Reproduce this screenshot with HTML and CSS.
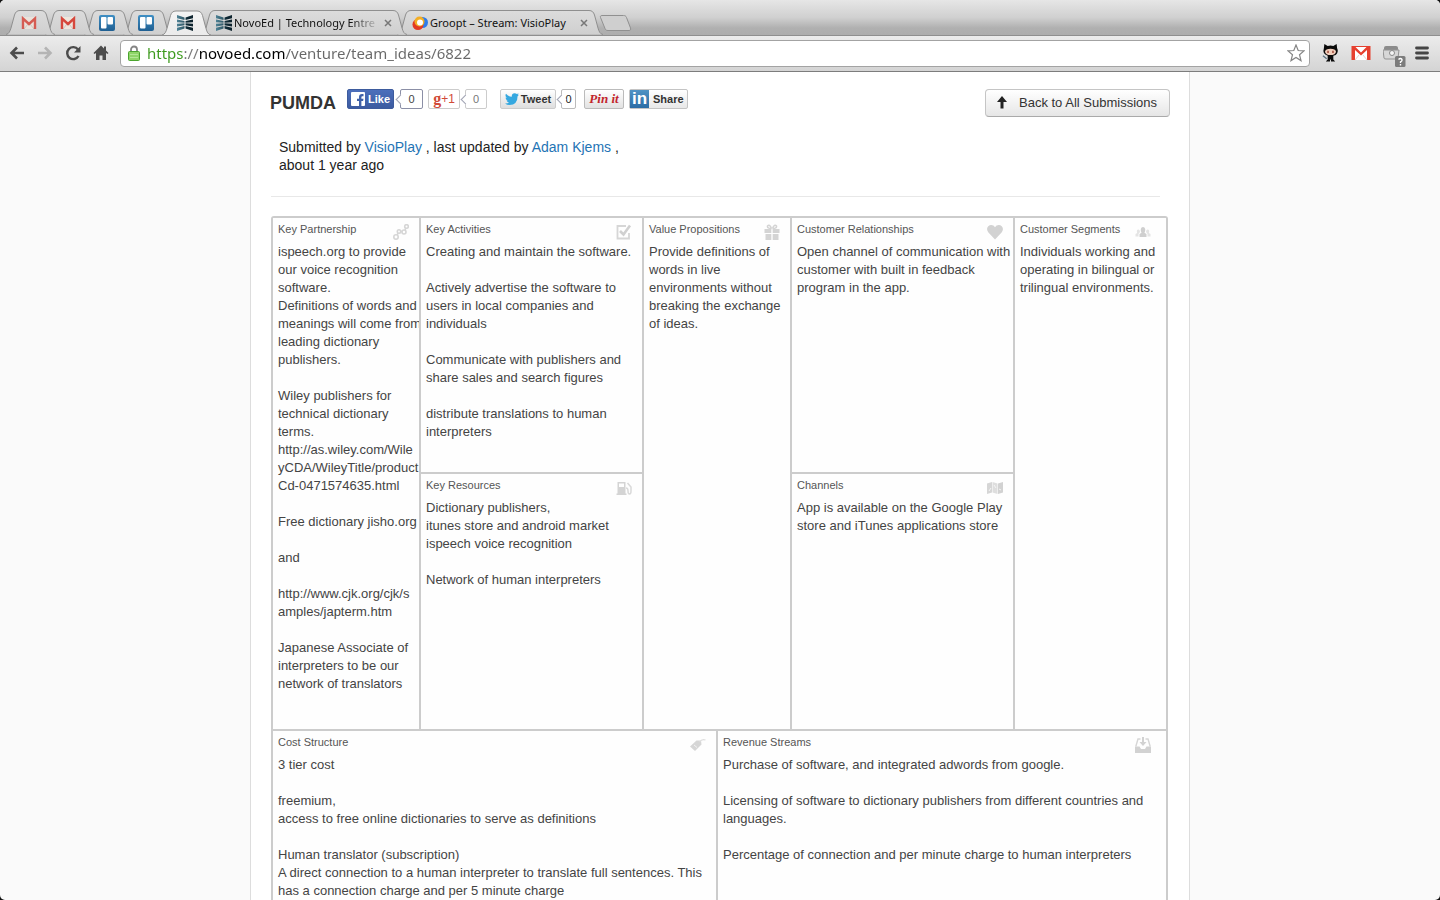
FILE: index.html
```html
<!DOCTYPE html>
<html lang="en">
<head>
<meta charset="utf-8">
<title>NovoEd | PUMDA</title>
<link rel="stylesheet" href="styles.css">
</head>
<body>
<svg class="defs" aria-hidden="true">
  <defs>
    <linearGradient id="tabFill" x1="0" y1="0" x2="0" y2="1"><stop offset="0" stop-color="#dcdcdc"/><stop offset="1" stop-color="#cfcfcf"/></linearGradient>
    <linearGradient id="tabOn" x1="0" y1="0" x2="0" y2="1"><stop offset="0" stop-color="#f4f4f4"/><stop offset="1" stop-color="#ebebeb"/></linearGradient>
    <linearGradient id="trelloFill" x1="0" y1="0" x2="0" y2="1"><stop offset="0" stop-color="#3f8fc4"/><stop offset="1" stop-color="#1f5f92"/></linearGradient>
    <linearGradient id="novoFill"><stop offset="0" stop-color="#4d8296"/><stop offset=".5" stop-color="#2f5563"/><stop offset=".6" stop-color="#0d2a36"/><stop offset="1" stop-color="#0d222c"/></linearGradient>
    <symbol id="tabSmall" viewBox="0 0 49 25"><path d="M0 24.500C3 24 4 21 5 18L8.500 5C9.500 2 11 .5 14 .5H35C38 .5 39.500 2 40.500 5L44 18C45 21.500 46 24 49 24.500"/></symbol>
    <symbol id="tabWide" viewBox="0 0 206 25"><path d="M0 24.500C3 24 4 21 5 18L8.500 5C9.500 2 11 .5 14 .5H192C195 .5 196.500 2 197.500 5L201 18C202 21.500 203 24 206 24.500"/></symbol>
    <symbol id="gmail" viewBox="0 0 16 14"><path d="M1 1H15V13H1z" fill="#eee6dd"/><path d="M3 13l4-5M13 13l-4-5" stroke="#cfc4bd" fill="none"/><path d="M2 13V2.500L8 8l6-5.500V13" fill="none" stroke="#d6483d" stroke-width="2.400"/></symbol>
    <symbol id="trello" viewBox="0 0 16 16"><rect width="16" height="16" rx="2" fill="url(#trelloFill)"/><rect x="2" y="2" width="5.500" height="11.500" rx="1" fill="#fff"/><rect x="8.500" y="2" width="5.500" height="7.500" rx="1" fill="#fff"/></symbol>
    <symbol id="novo" viewBox="0 0 16 16"><path d="M0 0L7.500 2.500V5L0 3.200zM16 0L8.500 2.500V5L16 3.200zM0 4.500L7.500 6V7.800L0 7.300zM16 4.500L8.500 6V7.800L16 7.300zM0 8.700L7.500 8.300V10.200L0 11.500zM16 8.700L8.500 8.300V10.200L16 11.500zM0 12.800L7.500 11V13.500L0 16zM16 12.800L8.500 11V13.500L16 16z" fill="url(#novoFill)"/></symbol>
  </defs>
</svg>
<div class="window">
  <header class="chrome">
    <nav class="tabs" aria-label="Tabs">
      <div class="tab t1"><svg class="shape"><use href="#tabSmall"/></svg><svg class="fav"><use href="#gmail"/></svg></div>
      <div class="tab t2"><svg class="shape"><use href="#tabSmall"/></svg><svg class="fav"><use href="#gmail"/></svg></div>
      <div class="tab t3"><svg class="shape"><use href="#tabSmall"/></svg><svg class="fav"><use href="#trello"/></svg></div>
      <div class="tab t4"><svg class="shape"><use href="#tabSmall"/></svg><svg class="fav"><use href="#trello"/></svg></div>
      <div class="tab active"><svg class="shape"><use href="#tabSmall"/></svg><svg class="fav"><use href="#novo"/></svg></div>
      <div class="tab wide t5"><svg class="shape"><use href="#tabWide"/></svg><svg class="fav"><use href="#novo"/></svg><span class="tab-title faded">NovoEd | Technology Entre</span><button class="close" aria-label="Close tab"><svg viewBox="0 0 8 8"><path d="M1 1l6 6M7 1L1 7"/></svg></button></div>
      <div class="tab wide t6"><svg class="shape"><use href="#tabWide"/></svg><svg class="fav" viewBox="0 0 16 16"><circle cx="10.500" cy="7.500" r="5.500" fill="#2d7bea"/><circle cx="6" cy="9.500" r="5.500" fill="#e23a24"/><circle cx="7.500" cy="6.500" r="5" fill="#f3ae24"/><circle cx="8" cy="7.500" r="3" fill="#fff"/></svg><span class="tab-title">Groopt – Stream: VisioPlay</span><button class="close" aria-label="Close tab"><svg viewBox="0 0 8 8"><path d="M1 1l6 6M7 1L1 7"/></svg></button></div>
      <button class="new-tab" aria-label="New tab"><svg viewBox="0 0 33 16"><path d="M3 .5H24.500C26 .5 27 1 27.500 2.500L31.500 13C32 14.500 31.500 15.500 30 15.500H9C7.500 15.500 6.500 15 6 13.500L1.500 2.500C1 1.500 1.500 .5 3 .5z" fill="#cfcfcf" stroke="#909090"/></svg></button>
    </nav>
    <div class="toolbar">
      <button class="tool" aria-label="Back"><svg viewBox="0 0 16 16"><path d="M15 8H3M8 2.500L2.500 8L8 13.500" fill="none" stroke="#4c4c4c" stroke-width="2.600"/></svg></button>
      <button class="tool" aria-label="Forward"><svg viewBox="0 0 16 16"><path d="M1 8H13M8 2.500L13.500 8L8 13.500" fill="none" stroke="#b4b4b4" stroke-width="2.600"/></svg></button>
      <button class="tool" aria-label="Reload"><svg viewBox="0 0 16 16"><path d="M13 4.500A6 6 0 1 0 13.500 11" fill="none" stroke="#4c4c4c" stroke-width="2.400"/><path d="M15.500 1V7.500H9z" fill="#4c4c4c"/></svg></button>
      <button class="tool" aria-label="Home"><svg viewBox="0 0 16 16"><path d="M8 .5L.5 8L1.500 9L3 8V15H6.500V10.500H9.500V15H13V8L14.500 9L15.500 8L13 5.500V1.500H11V3.500z" fill="#4c4c4c"/></svg></button>
      <div class="omnibox">
        <svg class="lock" viewBox="0 0 12 16"><path d="M3 7V4.500a3 3 0 0 1 6 0V7" fill="none" stroke="#858585" stroke-width="1.800"/><rect x=".5" y="6.500" width="11" height="9" rx="1" fill="#8fd468" stroke="#4ba52e"/><path d="M2 9.500H10M2 12.500H10" stroke="#b3e795"/></svg>
        <input class="url" type="text" aria-label="Address" value="https://novoed.com/venture/team_ideas/6822">
        <button class="star" aria-label="Bookmark"><svg viewBox="0 0 18 18"><path d="M9 1l2.200 5.500 5.800.4-4.500 3.800 1.500 5.900L9 13.400l-5 3.200 1.500-5.900L1 6.900l5.800-.4z" fill="#fff" stroke="#858585" stroke-width="1.200"/></svg></button>
      </div>
      <div class="extensions">
        <button class="ext" aria-label="GitHub"><svg viewBox="0 0 18 20"><path d="M2 5L2.500.5L6 2.500Q9 1.500 12 2.500L15.500.5L16 5Q18 9 14.500 12L12 13V17L14 19H9.500V17H8.500V19H4L6 17V13Q0 11 2 5z" fill="#0b0b0b"/><path d="M1 13l4 3" stroke="#5b7180" stroke-width="1.300"/><ellipse cx="9" cy="8.800" rx="5.800" ry="3.400" fill="#f1cdbb"/><path d="M5.500 7.500h1.800v2.500H5.500zM10.700 7.500h1.800v2.500h-1.800z" fill="#a95a48"/></svg></button>
        <button class="ext" aria-label="Gmail"><svg viewBox="0 0 20 20"><rect x=".5" y="3" width="19" height="14" fill="#e6402f"/><path d="M4.500 4h11L10 9.500zM4 7l6 5.500L16 7v10H4z" fill="#fff"/><path d="M4 17l4-5M16 17l-4-5" stroke="#e3d2ce"/></svg></button>
        <button class="ext" aria-label="Page extension"><svg viewBox="0 0 23 22"><rect x="1" y="1" width="14" height="5" rx="2" fill="#8b8b8b"/><path d="M0 5h16l-1 8q0 1-2 1H3q-2 0-2-1z" fill="#d7d7d7" stroke="#929292"/><circle cx="9" cy="8" r="2.500" fill="#f5f5f5" stroke="#888"/><rect x="12" y="11" width="10.500" height="11" rx="1.500" fill="#7c7c7c"/><path d="M15.500 14.500q2-2 3.500 0q.5 1.500-1.500 2.500v1M17.500 19v1.500" fill="none" stroke="#fff" stroke-width="1.400"/></svg></button>
        <button class="ext menu" aria-label="Menu"><svg viewBox="0 0 14 14"><path d="M1.500 2h11M1.500 7h11M1.500 12h11" stroke="#454545" stroke-width="2.800" stroke-linecap="round"/></svg></button>
      </div>
    </div>
  </header>
  <main class="page">
    <div class="container">
      <div class="heading">
        <h1>PUMDA</h1>
        <div class="social">
          <button class="fb"><svg viewBox="0 0 14 14"><rect width="14" height="14" rx="1" fill="#fff"/><path d="M8 14V9H6V6.700h2V5q0-3 3-3h1.500v2.300h-1.200q-.9 0-.9 1v1.400h2.100L12.100 9h-1.700v5z" fill="#3f61a9"/></svg>Like</button>
          <span class="count fb-count">0</span>
          <button class="gplus"><b>g</b>+1</button>
          <span class="count g-count">0</span>
          <button class="tweet"><svg viewBox="0 0 14 12"><path d="M0 10.500Q2.500 10.700 4 9.500Q2 9.200 1.500 7.500H2.800Q.6 6.800.5 4.500l1.300.4Q-.3 3 1 .8Q3.500 3.700 6.800 3.800Q6.500.3 9.700.2q1.300 0 2.100.9l1.900-.7-1.200 1.700 1.500-.4-1.400 1.600Q12.500 12 4.500 12 2 12 0 10.500z" fill="#35a8e0"/></svg>Tweet</button>
          <span class="count t-count">0</span>
          <button class="pin">Pin it</button>
          <button class="linkedin"><span class="in">in</span><span>Share</span></button>
        </div>
        <a class="back" href="#"><svg viewBox="0 0 10 13"><path d="M5 0L10 6H6.500V12.500H3.500V6H0z"/></svg>Back to All Submissions</a>
      </div>
      <p class="meta">Submitted by <a href="#">VisioPlay</a> , last updated by <a href="#">Adam Kjems</a> , about 1 year ago</p>
      <hr>
      <div class="canvas">
        <div class="top">
          <section class="cell tall">
            <div class="cell-head"><h2>Key Partnership</h2><svg viewBox="0 0 16 16"><g fill="none" stroke="#d6d6d6" stroke-width="1.600"><circle cx="3" cy="13" r="2.200"/><circle cx="6" cy="7.500" r="1.700"/><circle cx="11" cy="8" r="2"/><circle cx="13.500" cy="2.500" r="1.800"/><path d="M4 11l1.200-2M7.800 7.500H9M12 6l1-2"/></g></svg></div>
            <p>ispeech.org to provide
our voice recognition
software.
Definitions of words and
meanings will come from
leading dictionary
publishers.

Wiley publishers for
technical dictionary
terms.
http://as.wiley.com/Wile
yCDA/WileyTitle/product
Cd-0471574635.html

Free dictionary jisho.org

and

http://www.cjk.org/cjk/s
amples/japterm.htm

Japanese Associate of
interpreters to be our
network of translators</p>
          </section>
          <section class="cell">
            <div class="cell-head"><h2>Key Activities</h2><svg viewBox="0 0 16 16"><path d="M10 2H1.500V14.500H13V9" fill="none" stroke="#d6d6d6" stroke-width="1.800"/><path d="M4 7l3.500 3.500L14 1.500" fill="none" stroke="#d0d0d0" stroke-width="2.600"/></svg></div>
            <p>Creating and maintain the software.

Actively advertise the software to
users in local companies and
individuals

Communicate with publishers and
share sales and search figures

distribute translations to human
interpreters</p>
          </section>
          <section class="cell tall">
            <div class="cell-head"><h2>Value Propositions</h2><svg viewBox="0 0 16 16"><path d="M.5 5H7.300V9H.5zM8.700 5h6.800v4H8.700zM1.500 10h5.800v6H1.500zM8.700 10h5.800v6H8.700z" fill="#d4d4d4"/><path d="M7.500 4.500Q3 4.500 3.500 2Q5.500-.5 7.500 4.500M8.500 4.500q4.500 0 4-2.500Q10.500-.5 8.500 4.500" fill="none" stroke="#d4d4d4" stroke-width="1.500"/></svg></div>
            <p>Provide definitions of
words in live
environments without
breaking the exchange
of ideas.</p>
          </section>
          <section class="cell">
            <div class="cell-head"><h2>Customer Relationships</h2><svg viewBox="0 0 16 16"><path d="M8 15.500L1.200 8.200C-1.500 4.500 1 1 4.200 1Q6.800 1 8 3.200Q9.200 1 11.800 1C15 1 17.500 4.500 14.800 8.200z" fill="#d2d2d2"/></svg></div>
            <p>Open channel of communication with
customer with built in feedback
program in the app.</p>
          </section>
          <section class="cell tall last">
            <div class="cell-head"><h2>Customer Segments</h2><svg viewBox="0 0 16 16"><path d="M4.500 13v-3l2-1.200Q5.500 7 5.800 5Q6.300 3 8 3t2.200 2Q10.500 7 9.500 8.800l2 1.200v3z" fill="#cfcfcf"/><path d="M.5 12.500V10l1.700-1Q1 5.500 3.500 5.500q1.500 0 1.500 2.500l-1.500 2v2.500zM15.500 12.500V10l-1.700-1Q15 5.500 12.500 5.500 11 5.500 11 8l1.500 2v2.500z" fill="#e4e4e4"/></svg></div>
            <p>Individuals working and
operating in bilingual or
trilingual environments.</p>
          </section>
          <section class="cell">
            <div class="cell-head"><h2>Key Resources</h2><svg viewBox="0 0 16 16"><path d="M1.500 2h8v11.500h1V15H.5v-1.500h1zM3 3.500V7h5V3.500z" fill="#d4d4d4" fill-rule="evenodd"/><path d="M10 8q2 0 2 3t1.500 3q1.500 0 1.500-3V7L11.500 3" fill="none" stroke="#d9d9d9" stroke-width="1.500"/></svg></div>
            <p>Dictionary publishers,
itunes store and android market
ispeech voice recognition

Network of human interpreters</p>
          </section>
          <section class="cell">
            <div class="cell-head"><h2>Channels</h2><svg viewBox="0 0 16 16"><path d="M0 3.500L5 2v10.500L0 14z" fill="#d6d6d6"/><path d="M5.500 2L10.500 3.500V14L5.500 12.500z" fill="#dedede"/><path d="M11 3.500L16 2v10.500L11 14z" fill="#d2d2d2"/><path d="M2 11l2-3M7 5l2 3M12 9l2 1" stroke="#f5f5f5"/></svg></div>
            <p>App is available on the Google Play
store and iTunes applications store</p>
          </section>
        </div>
        <div class="bottom">
          <section class="cell">
            <div class="cell-head"><h2>Cost Structure</h2><svg viewBox="0 0 16 16"><path d="M0 9.500L6.500 3.500L11 3.500L11.500 7.500L5 14z" fill="#d6d6d6"/><path d="M9.500 5Q12 1.500 15.500 3" fill="none" stroke="#dedede" stroke-width="1.200"/><path d="M4 8l3 2.500" stroke="#f3f3f3"/></svg></div>
            <p>3 tier cost

freemium,
access to free online dictionaries to serve as definitions

Human translator (subscription)
A direct connection to a human interpreter to translate full sentences. This
has a connection charge and per 5 minute charge</p>
          </section>
          <section class="cell last">
            <div class="cell-head"><h2>Revenue Streams</h2><svg viewBox="0 0 16 16"><path d="M0 9.500H4.500L6 12h4l1.500-2.500H16V16H0z" fill="#d2d2d2"/><path d="M.8 9.500L3 2h2.500M15.200 9.500L13 2h-2.500" fill="none" stroke="#d6d6d6" stroke-width="1.400"/><path d="M7 0h2v5h2.500L8 9L4.500 5H7z" fill="#d2d2d2"/></svg></div>
            <p>Purchase of software, and integrated adwords from google.

Licensing of software to dictionary publishers from different countries and
languages.

Percentage of connection and per minute charge to human interpreters</p>
          </section>
        </div>
      </div>
    </div>
  </main>
</div>
</body>
</html>
```

FILE: styles.css
```css
* { box-sizing: border-box; }
body { margin: 0; background: #111; font-family: "Liberation Sans", Arial, sans-serif; }
button { font: inherit; padding: 0; border: 0; background: none; }
svg { display: block; flex: none; }
h1, h2, p { margin: 0; }
a { color: #1f74b5; text-decoration: none; }
.defs { position: absolute; width: 0; height: 0; }
.window { display: flex; flex-direction: column; height: 100vh; overflow: hidden; border-radius: 5px; background: #fafafa; }

.chrome { flex: none; font-family: "Noto Sans", sans-serif; }
.tabs { display: flex; align-items: flex-end; height: 36px; padding-left: 6px; background: linear-gradient(#e6e6e6, #d0d0d0 50%, #b0b0b0 80%, #adadad); border-bottom: 1px solid #8f8f8f; }
.tab { position: relative; display: flex; align-items: center; flex: none; width: 49px; height: 25px; margin-right: -10px; padding: 0 15px; }
.tab.wide { width: 206px; }
.shape { position: absolute; left: 0; top: 0; width: 100%; height: 25px; fill: url(#tabFill); stroke: #8f8f8f; }
.fav { position: relative; width: 16px; height: 16px; }
.t1 .fav, .t2 .fav { width: 16px; height: 14px; }
.t1 { z-index: 6; }
.t2 { z-index: 5; }
.t3 { z-index: 4; }
.t4 { z-index: 3; }
.t5 { z-index: 2; }
.t6 { z-index: 1; }
.t1 .fav { opacity: .85; }
.active { z-index: 8; height: 26px; margin-bottom: -1px; }
.active .shape { height: 26px; fill: url(#tabOn); }
.tab-title { position: relative; flex: 1; min-width: 0; margin-left: 2px; overflow: hidden; white-space: nowrap; font-size: 11px; line-height: 18px; color: #111; }
.faded { mask-image: linear-gradient(90deg, #000 80%, transparent); }
.close { position: relative; margin-left: 4px; }
.close svg { width: 8px; height: 8px; stroke: #777; stroke-width: 1.5; }
.new-tab { margin: 0 0 4px 6px; }
.new-tab svg { width: 33px; height: 16px; }
.toolbar { display: flex; align-items: center; gap: 12px; height: 36px; padding: 0 11px 1px 9px; background: linear-gradient(#ececec, #d4d4d4); border-bottom: 1px solid #7d7d7d; }
.tool svg { width: 16px; height: 16px; }
.omnibox { display: flex; align-items: center; flex: 1; height: 27px; margin-left: -1px; padding: 0 4px 0 7px; background: #fff; border: 1px solid #a3a3a3; border-radius: 4px; }
.lock { width: 12px; height: 16px; }
.url { flex: 1; min-width: 0; margin-left: 7px; padding: 0; border: 0; outline: 0; font: 15px/20px "Noto Sans", sans-serif; color: transparent; background: linear-gradient(90deg, #3c9a1c 36px, #777 36px, #777 52px, #000 52px, #000 138px, #686868 138px); -webkit-background-clip: text; background-clip: text; }
.star svg { width: 18px; height: 18px; }
.extensions { display: flex; align-items: center; gap: 12px; }
.ext:nth-child(1) svg { width: 17px; height: 20px; }
.ext:nth-child(2) svg { width: 20px; height: 20px; }
.ext:nth-child(3) svg { width: 23px; height: 22px; margin-top: 6px; }
.menu svg { width: 14px; height: 14px; }
.extensions .menu { margin-left: -3px; }

.page { flex: 1; min-height: 0; overflow: hidden; }
.container { max-width: 940px; min-height: 100%; margin: 0 auto; padding: 17px 19px 0; background: #fff; border: 1px solid #ddd; border-top: 0; }
.heading { display: flex; align-items: flex-start; height: 49px; }
h1 { margin-top: 4px; font-size: 18px; line-height: 20px; color: #333; }
.social { display: flex; align-items: center; height: 20px; margin-left: 11px; font-size: 11px; }
.social button { display: flex; align-items: center; justify-content: center; height: 20px; border-radius: 2px; font-weight: bold; color: #333; }
.social .fb { width: 47px; gap: 3px; color: #fff; background: linear-gradient(#4c6fbb, #3c5ba0); border: 1px solid #3d5b9d; }
.fb svg { width: 14px; height: 14px; }
.social .gplus { width: 32px; margin-left: 5px; color: #d14a37; background: #fff; border: 1px solid #ccc; font-weight: normal; font-size: 12px; }
.gplus b { font: bold 16px/16px "Liberation Serif", serif; }
.count { position: relative; width: 23px; height: 20px; margin-left: 6px; border: 1px solid #8b8fa6; border-radius: 2px; background: #fff; text-align: center; line-height: 19px; color: #444; }
.count::before { content: ""; position: absolute; left: -4px; top: 6px; width: 6px; height: 6px; background: #fff; border: solid #a0a3b3; border-width: 0 0 1px 1px; transform: rotate(45deg); }
.g-count { width: 22px; margin-left: 5px; border-color: #ccc; color: #777; }
.social .tweet { width: 56px; gap: 2px; margin-left: 13px; background: linear-gradient(#fff, #dedede); border: 1px solid #ccc; }
.tweet svg { width: 14px; height: 12px; }
.t-count { width: 15px; margin-left: 5px; border-color: #bbb; color: #222; }
.social .pin { width: 40px; margin-left: 8px; background: linear-gradient(#fff, #e2e2e2); border: 1px solid #bbb; color: #c2252c; font: italic bold 13px/16px "Liberation Serif", serif; }
.social .linkedin { justify-content: flex-start; width: 59px; gap: 4px; margin-left: 5px; background: linear-gradient(#fff, #e8e8e8); border: 1px solid #c4c4c4; }
.in { width: 19px; height: 18px; background: linear-gradient(#4f93c4, #2b6ca5); color: #fff; font-size: 17px; line-height: 18px; }
.back { display: flex; align-items: center; gap: 12px; height: 28px; margin-left: auto; padding: 0 12px 2px 11px; border: 1px solid #c5c5c5; border-bottom-color: #aaa; border-radius: 4px; background: linear-gradient(#fff, #e6e6e6); font-size: 13px; color: #333; }
.back svg { width: 10px; height: 13px; fill: #222; }
.meta { max-width: 370px; padding-left: 9px; font-size: 14px; line-height: 18px; color: #222; }
hr { height: 1px; margin: 22px 10px 19px 1px; border: 0; background: #e8e8e8; }

.canvas { display: flex; flex-direction: column; gap: 2px; margin: 0 2px 0 1px; padding: 2px; border-radius: 3px; background: #ccc; }
.top { display: grid; grid-template-columns: minmax(0, 146fr) minmax(0, 221fr) minmax(0, 146fr) minmax(0, 221fr) minmax(0, 151fr); grid-template-rows: minmax(254px, auto) minmax(255px, auto); gap: 2px; }
.bottom { display: grid; grid-template-columns: minmax(0, 443fr) minmax(0, 448fr); gap: 2px; min-height: 230px; }
.cell { padding: 2px 0 0 5px; overflow: hidden; background: #fefefe; }
.tall { grid-row: span 2; }
.cell-head { display: flex; justify-content: space-between; height: 23px; padding-right: 10px; }
.last .cell-head { padding-right: 15px; }
.cell-head svg { width: 16px; height: 16px; margin-top: 4px; }
h2 { font-size: 11px; line-height: 18px; font-weight: normal; color: #555; }
.cell p { font-size: 13px; line-height: 18px; color: #444; white-space: pre; }
```
